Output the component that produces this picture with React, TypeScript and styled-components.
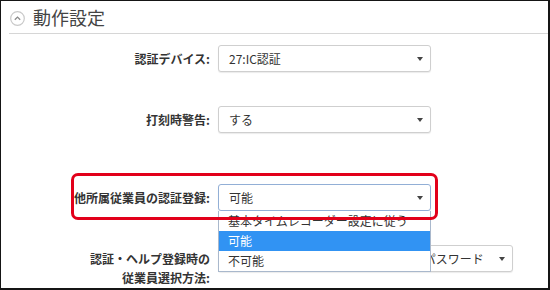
import React from "react"
import styled, { createGlobalStyle } from "styled-components"

const GlobalStyle = createGlobalStyle`
  html, body {
    margin: 0;
    padding: 0;
    background: #fff;
  }
  body {
    font-family: "Noto Sans CJK JP", "Noto Sans", sans-serif;
    color: #333;
  }
`

interface Option {
  label: string
  selected?: boolean
}

const options: Option[] = [
  { label: "基本タイムレコーダー設定に従う" },
  { label: "可能", selected: true },
  { label: "不可能" },
]

const App = (): JSX.Element => {
  return (
    <>
      <GlobalStyle />
      <Frame>
        <Header>
          <CollapseIcon>
            <svg width="15" height="15" viewBox="0 0 15 15">
              <circle cx="7.5" cy="7.5" r="6.8" fill="none" stroke="#c9c9c9" strokeWidth="1.2" />
              <path d="M4.8 8.8 L7.5 6.1 L10.2 8.8" fill="none" stroke="#8a8a8a" strokeWidth="1.3" />
            </svg>
          </CollapseIcon>
          <Title>動作設定</Title>
        </Header>

        <Form>
          <Row $top={11}>
            <Label>認証デバイス:</Label>
            <Select $width={213}>
              <Value>27:IC認証</Value>
              <Caret />
            </Select>
          </Row>

          <Row $top={34}>
            <Label>打刻時警告:</Label>
            <Select $width={213}>
              <Value>する</Value>
              <Caret />
            </Select>
          </Row>

          <Row $top={51}>
            <Label>他所属従業員の認証登録:</Label>
            <Select $width={213} $focused>
              <Value>可能</Value>
              <Caret />
            </Select>
            <OptionList>
              {options.map((o) => (
                <OptionItem key={o.label} $selected={o.selected}>
                  {o.label}
                </OptionItem>
              ))}
            </OptionList>
            <Highlight />
          </Row>

          <Row $top={34} $alignTop>
            <Label $multiline>
              認証・ヘルプ登録時の
              <br />
              従業員選択方法:
            </Label>
            <Select $width={295}>
              <Value>従業員番号入力（テンキー使用）＋ パスワード</Value>
              <Caret />
            </Select>
          </Row>
        </Form>
      </Frame>
    </>
  )
}

const Frame = styled.div`
  position: relative;
  width: 550px;
  height: 290px;
  box-sizing: border-box;
  border-style: solid;
  border-color: #151515;
  border-width: 1px 2px 2px 1px;
  background: #fff;
  overflow: hidden;
`

const Header = styled.div`
  display: flex;
  align-items: center;
  gap: 8px;
  height: 33px;
  box-sizing: border-box;
  margin-left: 8px;
  padding-left: 1px;
  border-bottom: 1px solid #d6d6d6;
`

const CollapseIcon = styled.span`
  display: flex;
  width: 15px;
  height: 15px;
  margin-top: 2px;
`

const Title = styled.h2`
  margin: 0;
  font-size: 18px;
  font-weight: 400;
  line-height: 24px;
  color: #444;
`

const Form = styled.div`
  display: flex;
  flex-direction: column;
`

const Row = styled.div<{ $top: number; $alignTop?: boolean }>`
  position: relative;
  display: flex;
  align-items: ${(p) => (p.$alignTop ? "flex-start" : "center")};
  gap: 8px;
  margin-top: ${(p) => p.$top}px;
`

const Label = styled.div<{ $multiline?: boolean }>`
  width: 209px;
  flex-shrink: 0;
  text-align: right;
  font-size: 12px;
  font-weight: 700;
  line-height: ${(p) => (p.$multiline ? "19px" : "16px")};
  padding-top: ${(p) => (p.$multiline ? "4px" : "0")};
  color: #333;
  white-space: nowrap;
`

const Select = styled.div<{ $width: number; $focused?: boolean }>`
  position: relative;
  display: flex;
  align-items: center;
  width: ${(p) => p.$width}px;
  height: 27px;
  box-sizing: border-box;
  padding: 0 24px 0 10px;
  border: 1px solid ${(p) => (p.$focused ? "#92afd6" : "#cfcfcf")};
  border-radius: 3px;
  box-shadow: 0 1px 1px rgba(0, 0, 0, 0.08);
  background: #fff;
  overflow: hidden;
`

const Value = styled.span`
  font-size: 12px;
  line-height: 16px;
  color: #333;
  white-space: nowrap;
`

const Caret = styled.span`
  position: absolute;
  right: 7px;
  top: 11px;
  width: 0;
  height: 0;
  border-left: 3.5px solid transparent;
  border-right: 3.5px solid transparent;
  border-top: 4px solid #444;
`

const OptionList = styled.ul`
  position: absolute;
  left: 217px;
  top: 27px;
  z-index: 2;
  width: 213px;
  margin: 0;
  padding: 0;
  list-style: none;
  box-sizing: border-box;
  border: 1px solid #a9b8cc;
  border-top: none;
  background: #fff;
`

const OptionItem = styled.li<{ $selected?: boolean }>`
  height: 20px;
  padding-left: 9px;
  font-size: 12px;
  line-height: 20px;
  color: ${(p) => (p.$selected ? "#fff" : "#333")};
  background: ${(p) => (p.$selected ? "#3193f3" : "transparent")};
  white-space: nowrap;
`

const Highlight = styled.div`
  position: absolute;
  left: 70px;
  top: -11px;
  z-index: 3;
  width: 367px;
  height: 47px;
  box-sizing: border-box;
  border: 3px solid #e2001a;
  border-radius: 7px;
  pointer-events: none;
`

export default App
